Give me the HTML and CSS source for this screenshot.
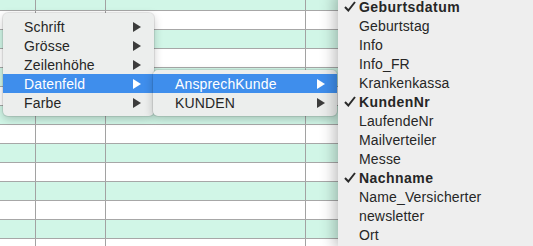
FILE: index.html
```html
<!DOCTYPE html>
<html lang="de">
<head>
    <meta charset="UTF-8">
    <meta name="viewport" content="width=device-width, initial-scale=1.0">
    <link rel="stylesheet" href="styles.css">
    <title>Datenfeld</title>
</head>
<body>
    <!-- Tabelle im Hintergrund -->
    <div class="tabelle">
        <div class="zeile gruen"><div class="zelle a"></div><div class="zelle b"></div><div class="zelle c"></div><div class="zelle d"></div></div>
        <div class="zeile"><div class="zelle a"></div><div class="zelle b"></div><div class="zelle c"></div><div class="zelle d"></div></div>
        <div class="zeile gruen"><div class="zelle a"></div><div class="zelle b"></div><div class="zelle c"></div><div class="zelle d"></div></div>
        <div class="zeile"><div class="zelle a"></div><div class="zelle b"></div><div class="zelle c"></div><div class="zelle d"></div></div>
        <div class="zeile gruen"><div class="zelle a"></div><div class="zelle b"></div><div class="zelle c"></div><div class="zelle d"></div></div>
        <div class="zeile"><div class="zelle a"></div><div class="zelle b"></div><div class="zelle c"></div><div class="zelle d"></div></div>
        <div class="zeile gruen"><div class="zelle a"></div><div class="zelle b"></div><div class="zelle c"></div><div class="zelle d"></div></div>
        <div class="zeile"><div class="zelle a"></div><div class="zelle b"></div><div class="zelle c"></div><div class="zelle d"></div></div>
        <div class="zeile gruen"><div class="zelle a"></div><div class="zelle b"></div><div class="zelle c"></div><div class="zelle d"></div></div>
        <div class="zeile"><div class="zelle a"></div><div class="zelle b"></div><div class="zelle c"></div><div class="zelle d"></div></div>
        <div class="zeile gruen"><div class="zelle a"></div><div class="zelle b"></div><div class="zelle c"></div><div class="zelle d"></div></div>
        <div class="zeile"><div class="zelle a"></div><div class="zelle b"></div><div class="zelle c"></div><div class="zelle d"></div></div>
        <div class="zeile gruen"><div class="zelle a"></div><div class="zelle b"></div><div class="zelle c"></div><div class="zelle d"></div></div>
        <div class="zeile"><div class="zelle a"></div><div class="zelle b"></div><div class="zelle c"></div><div class="zelle d"></div></div>
    </div>

    <!-- Kontextmenü -->
    <ul class="menu hauptmenu">
        <li>Schrift<span class="pfeil"></span></li>
        <li>Grösse<span class="pfeil"></span></li>
        <li>Zeilenhöhe<span class="pfeil"></span></li>
        <li class="aktiv">Datenfeld<span class="pfeil"></span></li>
        <li>Farbe<span class="pfeil"></span></li>
    </ul>

    <ul class="menu untermenu">
        <li class="aktiv">AnsprechKunde<span class="pfeil"></span></li>
        <li>KUNDEN<span class="pfeil"></span></li>
    </ul>

    <ul class="menu felder">
        <li class="gewaehlt"><svg class="haken" width="12" height="11" viewBox="0 0 12 11"><path d="M1 6 L4.3 9.5 L11 1"/></svg>Geburtsdatum</li>
        <li>Geburtstag</li>
        <li>Info</li>
        <li>Info_FR</li>
        <li>Krankenkassa</li>
        <li class="gewaehlt"><svg class="haken" width="12" height="11" viewBox="0 0 12 11"><path d="M1 6 L4.3 9.5 L11 1"/></svg>KundenNr</li>
        <li>LaufendeNr</li>
        <li>Mailverteiler</li>
        <li>Messe</li>
        <li class="gewaehlt"><svg class="haken" width="12" height="11" viewBox="0 0 12 11"><path d="M1 6 L4.3 9.5 L11 1"/></svg>Nachname</li>
        <li>Name_Versicherter</li>
        <li>newsletter</li>
        <li>Ort</li>
    </ul>
</body>
</html>
```

FILE: styles.css
```css
body {
    margin: 0;
    overflow: hidden;
    font-family: "Liberation Sans", Arial, sans-serif;
    font-size: 14px;
    color: #262626;
    background-color: #ffffff;
}

/* ---------- Tabelle ---------- */

.tabelle {
    margin-top: -8px;
}

.zeile {
    display: flex;
    height: 18px;
    border-bottom: 1px solid #a7a7a7;
    background-color: #ffffff;
}

.zeile.gruen {
    background-color: #d1f6e7;
}

.zelle {
    border-right: 1px solid #a2a2a2;
}

.zelle.a { width: 35px; }
.zelle.b { width: 69px; }
.zelle.c { width: 199px; }
.zelle.d { flex: 1; border-right: none; }

/* ---------- Menüs ---------- */

.menu {
    position: absolute;
    margin: 0;
    padding: 4px 0;
    list-style: none;
    background-color: #eceeed;
    border-radius: 5px;
    box-shadow: 0 0 0 1px rgba(0, 0, 0, 0.08), 0 3px 10px rgba(0, 0, 0, 0.22);
}

.menu li {
    display: flex;
    align-items: center;
    height: 19px;
    letter-spacing: 0.15px;
}

.hauptmenu {
    left: 3px;
    top: 13px;
    width: 151px;
}

.hauptmenu li {
    padding-left: 21px;
}

.hauptmenu .pfeil {
    margin-left: auto;
    margin-right: 13px;
}

.untermenu {
    left: 153px;
    top: 70px;
    width: 184px;
}

.untermenu li {
    padding-left: 22px;
}

.untermenu .pfeil {
    margin-left: auto;
    margin-right: 12px;
}

.pfeil {
    width: 0;
    height: 0;
    border-top: 5px solid transparent;
    border-bottom: 5px solid transparent;
    border-left: 8px solid #3c3c3c;
}

.menu li.aktiv {
    background-color: #3f8eec;
    color: #ffffff;
}

.menu li.aktiv .pfeil {
    border-left-color: #ffffff;
}

/* Feldliste rechts */
.felder {
    left: 338px;
    top: -7px;
    width: 220px;
    border-radius: 0;
    background-color: #eeeeee;
    box-shadow: -3px 0 14px rgba(0, 0, 0, 0.28);
}

.felder li {
    padding-left: 21px;
    position: relative;
}

.felder li.gewaehlt {
    font-weight: bold;
    letter-spacing: 0.45px;
}

.haken {
    position: absolute;
    left: 6px;
    top: 4px;
}

.haken path {
    fill: none;
    stroke: #2a2a2a;
    stroke-width: 2;
}
```
